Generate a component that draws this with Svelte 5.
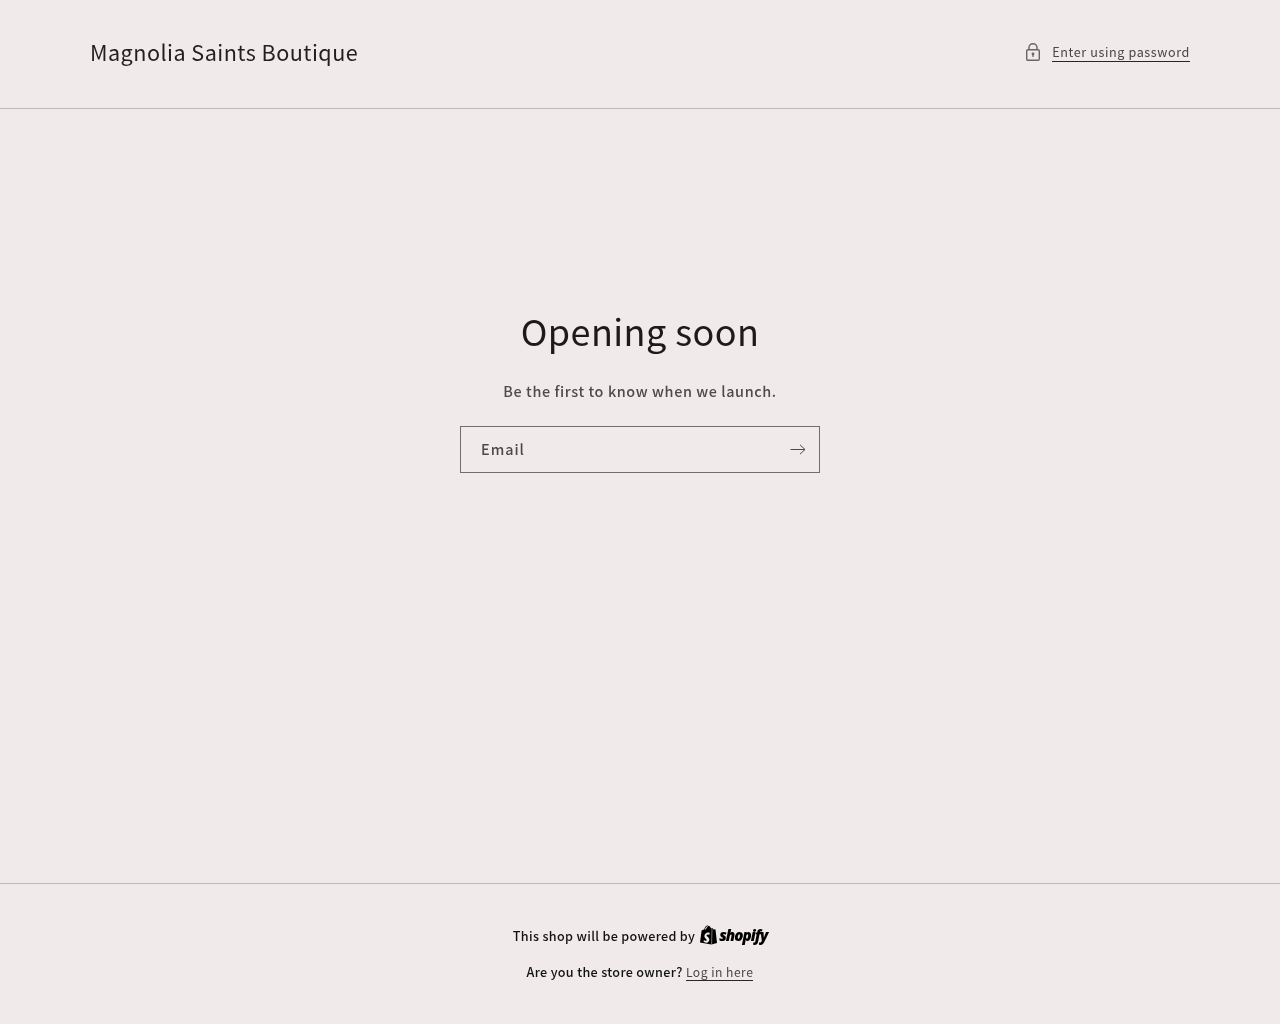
<script>
  let email = '';
</script>

<div class="page">
  <header class="top">
    <span class="logo">Magnolia Saints Boutique</span>
    <div class="enter">
      <svg class="lock" width="14" height="18" viewBox="0 0 14 18" fill="none">
        <rect x="0.7" y="6.7" width="12.6" height="10.6" rx="1.2" stroke="currentColor" stroke-width="1.4" />
        <path d="M3 6.7V4.400a4 3.700 0 0 1 8 0v2.300" stroke="currentColor" stroke-width="1.4" />
        <circle cx="7" cy="11" r="1.4" fill="currentColor" />
        <path d="M7 11.500v2.500" stroke="currentColor" stroke-width="1.200" />
      </svg>
      <a href="#password">Enter using password</a>
    </div>
  </header>

  <main class="content">
    <h1>Opening soon</h1>
    <p class="sub">Be the first to know when we launch.</p>
    <form class="signup" on:submit|preventDefault>
      <input type="email" placeholder="Email" bind:value={email} />
      <button type="submit" aria-label="Subscribe">
        <svg width="16" height="11" viewBox="0 0 16 11" fill="none">
          <path d="M0.5 5.5H15" stroke="currentColor" stroke-width="1" />
          <path d="M10 0.8l5 4.7-5 4.7" stroke="currentColor" stroke-width="1" />
        </svg>
      </button>
    </form>
  </main>

  <footer class="bottom">
    <div class="powered">
      <span>This shop will be powered by</span>
      <span class="shopify">
        <svg class="bag" width="18" height="20" viewBox="0 0 18 20">
          <path d="M1 17.600L2.600 5.400c1-.4 1.900-.6 2.600-.8C5.600 2.400 6.900.5 8.600.5c.5 0 .9.200 1.200.6 1-.1 1.800.9 2.200 2.300l1.300-.3 1.100 1.100 2.100.3L18 18l-5.600 1.500z" fill="#000" />
          <path d="M5.900 4.600C6.300 2.900 7.300 1.500 8.600 1.300c.3 0 .5 0 .6.200-1.100.5-1.900 1.500-2.200 2.800z" fill="#f0eaea" />
          <path d="M12.600 19.300l.4-15.600" stroke="#f0eaea" stroke-width="0.5" fill="none" />
          <path d="M10.800 7.800l-.6 2.100s-.7-.3-1.400-.3c-1.200 0-1.300.8-1.300 1 0 1 2.800 1.500 2.800 4 0 1.900-1.200 3.200-2.900 3.200-1.900 0-2.900-1.200-2.900-1.200l.5-1.700s1 .9 1.900.9c.6 0 .8-.5.8-.8 0-1.400-2.300-1.500-2.300-3.800 0-2 1.400-3.800 4.100-3.800.9 0 1.300.4 1.300.4z" fill="#f0eaea" />
        </svg>
        <span class="word">shopify</span>
      </span>
    </div>
    <p class="owner">Are you the store owner? <a href="#login">Log in here</a></p>
  </footer>
</div>

<style>
  :global(body) {
    margin: 0;
    background: #f0eaea;
  }

  .page {
    min-height: 1024px;
    display: flex;
    flex-direction: column;
    font-family: "Noto Sans CJK JP", "Noto Sans", sans-serif;
    letter-spacing: 0.6px;
    color: #121212;
    will-change: transform;
  }

  .top {
    height: 104px;
    box-sizing: content-box;
    padding: 0 90px 4px;
    display: flex;
    align-items: center;
    justify-content: space-between;
    border-bottom: 1px solid #bfbaba;
  }

  .logo {
    font-size: 21.6px;
    letter-spacing: 0.46px;
    line-height: 1;
    color: #231f1f;
  }

  .enter {
    display: flex;
    align-items: center;
    gap: 12px;
    color: #6a6666;
  }

  .enter a {
    font-size: 12.6px;
    line-height: 18px;
    color: #4a4646;
    text-decoration: none;
    border-bottom: 1px solid #2a2626;
  }

  .content {
    flex: 1;
    display: flex;
    flex-direction: column;
    align-items: center;
    padding-top: 197px;
  }

  h1 {
    margin: 0;
    font-size: 36px;
    letter-spacing: 0.42px;
    font-weight: 400;
    line-height: 48px;
    color: #1c1a1a;
  }

  .sub {
    margin: 25px 0 0;
    font-size: 14.4px;
    font-weight: 500;
    letter-spacing: 0.6px;
    line-height: 24px;
    color: #4d4a4a;
  }

  .signup {
    margin-top: 23px;
    width: 360px;
    height: 47px;
    box-sizing: border-box;
    border: 1px solid #726e6e;
    display: flex;
    align-items: center;
  }

  input {
    flex: 1;
    min-width: 0;
    border: none;
    outline: none;
    background: none;
    padding: 0 20px 2px;
    font: inherit;
    font-size: 14.4px;
    font-weight: 500;
    letter-spacing: 1px;
    color: #4d4a4a;
  }

  input::placeholder {
    color: #4d4a4a;
    opacity: 1;
  }

  button {
    width: 44px;
    height: 44px;
    padding: 0 0 0 1px;
    border: none;
    background: none;
    color: #4d4a4a;
    display: flex;
    align-items: center;
    justify-content: center;
  }

  .bottom {
    height: 141px;
    border-top: 1px solid #bfbaba;
    display: flex;
    flex-direction: column;
    align-items: center;
    font-size: 12.6px;
    font-weight: 500;
    line-height: 18px;
    color: #121212;
    padding-top: 40px;
    box-sizing: border-box;
  }

  .powered {
    display: flex;
    align-items: center;
    gap: 4px;
    height: 24px;
    letter-spacing: 0.32px;
  }

  .shopify {
    display: flex;
    align-items: center;
    gap: 2px;
    color: #000;
  }

  .bag {
    margin-top: -3px;
  }

  .word {
    font-family: "Open Sans", sans-serif;
    font-size: 15.2px;
    font-weight: 800;
    font-style: italic;
    letter-spacing: -1px;
    margin-top: -2px;
  }

  .owner {
    margin: 15px 0 0;
    letter-spacing: 0.32px;
  }

  .owner a {
    font-size: 12.1px;
    font-weight: 400;
    letter-spacing: 0.5px;
    color: #4a4646;
    text-decoration: none;
    border-bottom: 1px solid #2a2626;
  }
</style>
